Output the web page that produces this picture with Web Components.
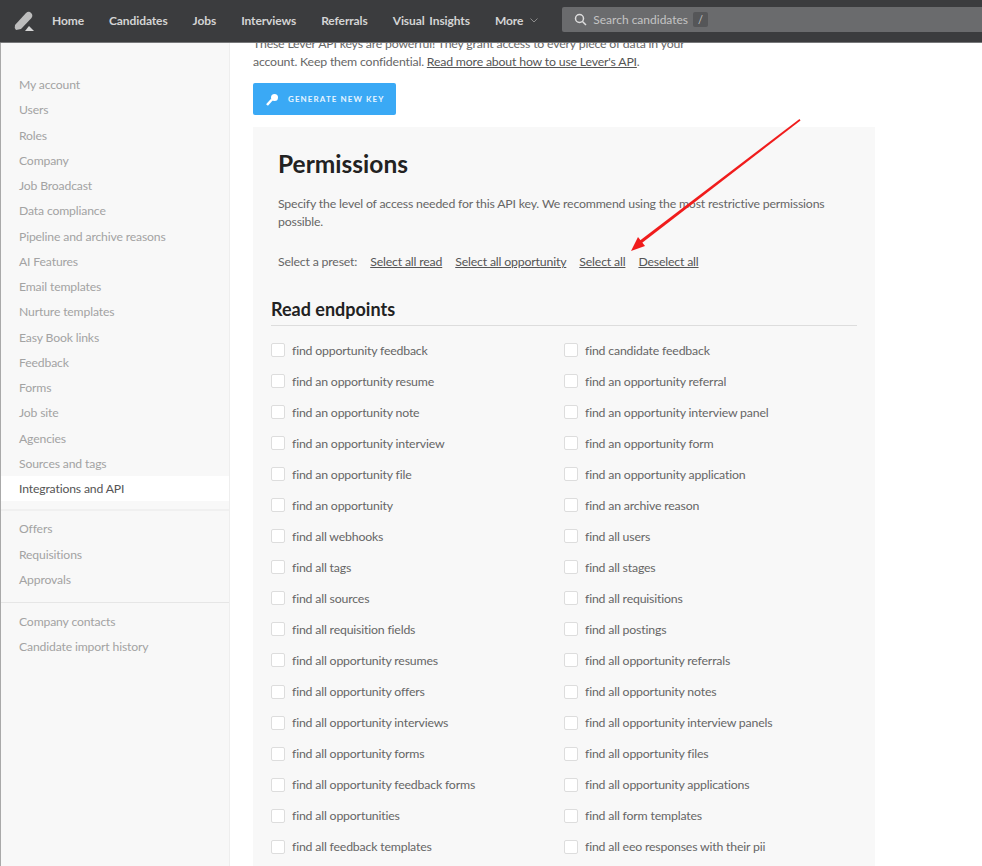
<!DOCTYPE html>
<html>
<head>
<meta charset="utf-8">
<style>
    html, body { margin: 0; height: 866px; overflow: hidden; background: #fff; }
    body { font-family: Lato, "Liberation Sans", sans-serif; font-size: 13px; color: #555; }
    .page { display: flex; height: 823px; overflow: hidden; }
</style>
</head>
<body>
<top-nav></top-nav>
<div class="page">
    <side-nav></side-nav>
    <api-panel></api-panel>
</div>
<script>
class TopNav extends HTMLElement {
    constructor() {
        super();
        this.attachShadow({ mode: "open" });
        const links = ["Home", "Candidates", "Jobs", "Interviews", "Referrals", "Visual Insights"];
        this.shadowRoot.innerHTML = `
            <style>
                :host { display: flex; align-items: center; height: 43px; box-sizing: border-box; padding-bottom: 1px; background: #3b3c3e; border-bottom: 1px solid #77787a; position: relative; z-index: 2; }
                svg.logo { margin-left: 14px; width: 21px; height: 22px; flex: none; }
                nav { display: flex; margin-left: 17px; font: 700 12px Lato, sans-serif; color: #d4d4d4; letter-spacing: -.1px; word-spacing: 2px; }
                nav span { margin-right: 25px; white-space: nowrap; }
                .more { display: flex; align-items: center; gap: 7px; margin-right: 0; }
                .search { display: flex; align-items: center; margin-left: 24px; flex: 1; height: 25px; margin-top: -3px; background: #6a6b6d; border-radius: 2px 0 0 2px; color: #c4c4c4; font-size: 12px; }
                .search svg { margin-left: 12px; margin-right: 6px; }
                kbd { font: 11px Lato, sans-serif; background: #555658; border-radius: 2px; padding: 1px 5px; margin-left: 5px; height: 13px; line-height: 13px; }
            </style>
            <svg class="logo" viewBox="0 0 21 22">
                <path d="M1 15 L12 3 Q14 1 16 2 L18 4 Q19 6 17.500 8 L7 19 L2 20 Q0 18 1 15Z" fill="#bdbdbd"/>
                <path d="M11 21 L15 16 L20 21Z" fill="#d5d5d5"/>
            </svg>
            <nav>
                ${links.map(l => `<span>${l}</span>`).join("")}
                <span class="more">More
                    <svg width="8" height="5" viewBox="0 0 8 5"><path d="M.5 .5 L4 4 L7.500 .5" fill="none" stroke="#8c8c8c"/></svg>
                </span>
            </nav>
            <div class="search">
                <svg width="13" height="13" viewBox="0 0 13 13"><circle cx="5.500" cy="5.500" r="4" fill="none" stroke="#ddd" stroke-width="1.500"/><path d="M8.500 8.500 L12 12" stroke="#ddd" stroke-width="1.500"/></svg>
                <span>Search candidates</span><kbd>/</kbd>
            </div>
        `;
    }
}

class SideNav extends HTMLElement {
    constructor() {
        super();
        this.attachShadow({ mode: "open" });
        const groups = [
            ["My account", "Users", "Roles", "Company", "Job Broadcast", "Data compliance", "Pipeline and archive reasons", "AI Features", "Email templates", "Nurture templates", "Easy Book links", "Feedback", "Forms", "Job site", "Agencies", "Sources and tags", "Integrations and API"],
            ["Offers", "Requisitions", "Approvals"],
            ["Company contacts", "Candidate import history"]
        ];
        this.shadowRoot.innerHTML = `
            <style>
                :host { display: block; width: 230px; flex: none; box-sizing: border-box; padding-top: 29px; background: #f8f8f8; border-left: 1px solid #a9a9a9; border-right: 1px solid #eee; font: 12.200px Lato, sans-serif; letter-spacing: -.15px; color: #a3a3a3; }
                section { padding-bottom: 10px; border-bottom: 1px solid #e6e6e6; margin-bottom: 6px; }
                section:first-of-type { padding-bottom: 8px; margin-bottom: 5px; border-bottom: 2px solid #f0f0f0; }
                section:last-child { border-bottom: 0; }
                div { height: 25.250px; line-height: 25.250px; padding-left: 18px; white-space: nowrap; }
                .on { background: #fff; color: #555; }
            </style>
            ${groups.map(g => `<section>${g.map(t =>
                `<div class="${t === "Integrations and API" ? "on" : ""}">${t}</div>`).join("")}</section>`).join("")}
        `;
    }
}

class PermCheck extends HTMLElement {
    constructor() {
        super();
        this.attachShadow({ mode: "open" });
        this.shadowRoot.innerHTML = `
            <style>
                :host { display: flex; align-items: center; height: 31.060px; font: 12.300px Lato, sans-serif; letter-spacing: -.18px; color: #666; white-space: nowrap; }
                i { width: 12px; height: 12px; margin-right: 7px; background: #fff; border: 1px solid #ddd; border-radius: 2px; flex: none; }
            </style>
            <i></i><slot></slot>
        `;
    }
}

class ApiPanel extends HTMLElement {
    constructor() {
        super();
        this.attachShadow({ mode: "open" });
        const perms = [
            "find opportunity feedback", "find candidate feedback",
            "find an opportunity resume", "find an opportunity referral",
            "find an opportunity note", "find an opportunity interview panel",
            "find an opportunity interview", "find an opportunity form",
            "find an opportunity file", "find an opportunity application",
            "find an opportunity", "find an archive reason",
            "find all webhooks", "find all users",
            "find all tags", "find all stages",
            "find all sources", "find all requisitions",
            "find all requisition fields", "find all postings",
            "find all opportunity resumes", "find all opportunity referrals",
            "find all opportunity offers", "find all opportunity notes",
            "find all opportunity interviews", "find all opportunity interview panels",
            "find all opportunity forms", "find all opportunity files",
            "find all opportunity feedback forms", "find all opportunity applications",
            "find all opportunities", "find all form templates",
            "find all feedback templates", "find all eeo responses with their pii"
        ];
        this.shadowRoot.innerHTML = `
            <style>
                :host { display: block; flex: 1; padding-left: 23px; font: 12.300px/18px Lato, sans-serif; letter-spacing: -.18px; color: #666; position: relative; min-width: 0; }
                a { color: #555; text-decoration: underline; }
                .intro { width: 436px; margin: -8px 0 0; }
                .gen { display: flex; align-items: center; width: 143px; height: 32px; margin-top: 12px; box-sizing: border-box; padding-left: 13px; background: #3aa9f5; border-radius: 2px; color: #e8f5ff; font: 700 8px Lato, sans-serif; letter-spacing: 1.100px; }
                .gen svg { margin-right: 9px; }
                .card { width: 622px; height: 761px; margin-top: 12px; box-sizing: border-box; padding: 23px 18px 0 18px; background: #f8f8f8; }
                h1 { margin: 0 0 0 7px; font: 700 24.500px/28px Lato, sans-serif; letter-spacing: 0; color: #222; }
                .desc { margin: 17px 0 0 7px; width: 560px; }
                .preset { display: flex; margin: 22px 0 0 7px; }
                .preset a { margin-left: 13px; }
                h2 { margin: 26px 0 0; padding-bottom: 4px; border-bottom: 1px solid #ddd; font: 700 18px/24px Lato, sans-serif; letter-spacing: 0; color: #222; }
                .grid { display: grid; grid-template-columns: 293px 1fr; margin-top: 8.500px; }
                svg.arrow { position: absolute; left: 0; top: 0; pointer-events: none; overflow: visible; }
            </style>
            <p class="intro">These Lever API keys are powerful! They grant access to every piece of data in your account. Keep them confidential. <a>Read more about how to use Lever's API</a>.</p>
            <div class="gen">
                <svg width="13" height="13" viewBox="0 0 13 13"><path d="M1 12 L6 6.500" stroke="#fff" stroke-width="2.500"/><circle cx="8.500" cy="4.500" r="3.500" fill="#fff"/></svg>
                GENERATE NEW KEY
            </div>
            <div class="card">
                <h1>Permissions</h1>
                <p class="desc">Specify the level of access needed for this API key. We recommend using the most restrictive permissions possible.</p>
                <div class="preset">Select a preset: <a>Select all read</a><a>Select all opportunity</a><a>Select all</a><a>Deselect all</a></div>
                <h2>Read endpoints</h2>
                <div class="grid">${perms.map(p => `<perm-check>${p}</perm-check>`).join("")}</div>
            </div>
            <svg class="arrow" width="10" height="10">
                <path d="M569.500 76 L570.500 77.500 L408 203 L406 200.500Z" fill="#f01c1c"/>
                <path d="M401 208 L415 203 L408 194Z" fill="#f01c1c"/>
            </svg>
        `;
    }
}

customElements.define("top-nav", TopNav);
customElements.define("side-nav", SideNav);
customElements.define("perm-check", PermCheck);
customElements.define("api-panel", ApiPanel);
</script>
</body>
</html>
